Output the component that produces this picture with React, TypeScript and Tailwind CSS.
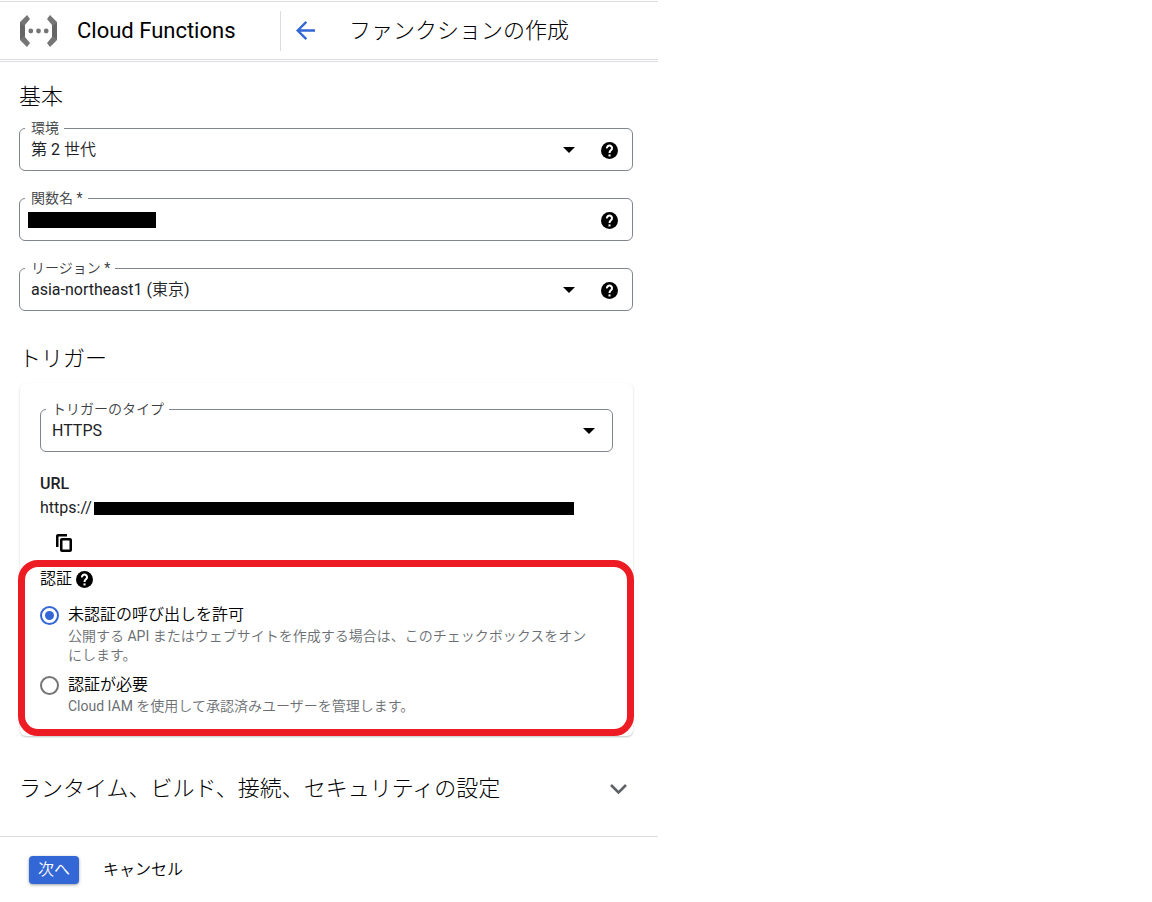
import { useState } from "react";

const HelpIcon = () => (
  <svg viewBox="2 2 20 20" className="size-[17px] shrink-0">
    <circle cx="12" cy="12" r="10" />
    <path
      d="M9 9.500a3 3 0 1 1 5 1.900c-1.200 1-2 1.600-2 3.600"
      fill="none"
      stroke="white"
      strokeWidth="2.400"
    />
    <path d="M10.800 16.600h2.400V19h-2.400z" fill="white" />
  </svg>
);

const HelpButton = () => (
  <button type="button" aria-label="ヘルプ" className="cursor-pointer">
    <HelpIcon />
  </button>
);

const FunctionsLogo = () => (
  <svg viewBox="0 0 37 32" className="h-8 w-[37px] shrink-0">
    <g fill="#757575">
      <path d="M7 0L0 7v18l7 7 3-4-5-6V10l5-6z" />
      <path d="M30 0l7 7v18l-7 7-3-4 5-6V10l-5-6z" />
      <circle cx="10.800" cy="16" r="2.400" />
      <circle cx="18.500" cy="16" r="2.400" />
      <circle cx="26.200" cy="16" r="2.400" />
    </g>
    <path d="M0 8l5 3v10l-5 3zM37 8l-5 3v10l5 3z" fill="#666666" />
  </svg>
);

const Field = ({ id, label, help, children }: any) => (
  <fieldset className="min-w-0 rounded-md border border-[#80868b] pb-2">
    <legend className="ml-[5px] pr-[5px] pl-[6px] text-sm leading-5 text-[#3c4043]">
      <label htmlFor={id} className="block">
        {label}
      </label>
    </legend>
    <div className="flex h-6 items-center pr-[14px] pl-[11px]">
      {children}
      {help && <HelpButton />}
    </div>
  </fieldset>
);

const Select = ({ id, options, help }: any) => (
  <div className={help ? "relative mr-[26px] flex-1" : "relative mr-[3px] flex-1"}>
    <select
      id={id}
      className="block w-full cursor-pointer appearance-none bg-transparent text-base leading-6 text-[#202124] outline-none"
    >
      {options.map((option: string) => (
        <option key={option}>{option}</option>
      ))}
    </select>
    <svg
      viewBox="0 0 12 6"
      className="pointer-events-none absolute top-[9px] right-0 h-[6px] w-3 fill-black"
    >
      <path d="M0 0h12L6 6z" />
    </svg>
  </div>
);

const authOptions = [
  {
    id: "allow",
    title: "未認証の呼び出しを許可",
    description:
      "公開する API またはウェブサイトを作成する場合は、このチェックボックスをオンにします。",
  },
  {
    id: "require",
    title: "認証が必要",
    description: "Cloud IAM を使用して承認済みユーザーを管理します。",
  },
];

const App = () => {
  const [auth, setAuth] = useState("allow");

  return (
    <div className="min-h-screen bg-white font-['Roboto','Noto_Sans_CJK_JP_DemiLight','Noto_Sans_CJK_JP',sans-serif] text-[#202124]">
      <div className="w-full max-w-[658px]">
        <header className="mt-px flex h-[61px] items-center border-t border-b-3 border-[#dadce0] pl-5 text-[22px] leading-8 text-black [border-bottom-style:double]">
          <FunctionsLogo />
          <span className="ml-5 w-[203px]">Cloud Functions</span>
          <div className="flex h-10 items-center border-l border-[#dadce0] pl-[15px]">
            <button type="button" aria-label="戻る" className="cursor-pointer">
              <svg viewBox="4 4 16 16" className="size-[19px] fill-[#3367d6]">
                <path d="M20 11H7.83l5.59-5.59L12 4l-8 8 8 8 1.41-1.41L7.83 13H20v-2z" />
              </svg>
            </button>
            <h1 className="ml-[34px] font-['Roboto','Noto_Sans_CJK_JP',sans-serif] font-light">
              ファンクションの作成
            </h1>
          </div>
        </header>

        <main className="pr-[25px] pl-[19px]">
          <h2 className="mt-[19px] font-['Roboto','Noto_Sans_CJK_JP',sans-serif] text-[22px] leading-8 font-light text-black">
            基本
          </h2>
          <div className="mt-[5px] flex flex-col gap-[17px]">
            <Field id="environment" label="環境" help>
              <Select id="environment" options={["第 2 世代"]} help />
            </Field>
            <Field id="function-name" label="関数名 *" help>
              <span className="-ml-[3px] h-4 w-32 shrink-0 bg-black" />
              <input
                id="function-name"
                type="text"
                className="min-w-0 flex-1 bg-transparent text-base leading-6 outline-none"
              />
            </Field>
            <Field id="region" label="リージョン *" help>
              <Select id="region" options={["asia-northeast1 (東京)"]} help />
            </Field>
          </div>

          <h2 className="mt-8 font-['Roboto','Noto_Sans_CJK_JP',sans-serif] text-[22px] leading-8 font-light text-black">
            トリガー
          </h2>
          <section className="mt-2 ml-px rounded-md px-5 pt-4 pb-5 shadow-[0_1px_2px_rgba(60,64,67,0.3)]">
            <Field id="trigger-type" label="トリガーのタイプ">
              <Select id="trigger-type" options={["HTTPS"]} />
            </Field>

            <h3 className="mt-5 text-base leading-6 font-medium">URL</h3>
            <div className="flex h-6 items-center text-base leading-6">
              https://
              <span className="mr-[39px] ml-[2px] h-[13px] flex-1 bg-black" />
            </div>
            <button
              type="button"
              aria-label="コピー"
              className="mt-[14px] ml-4 block cursor-pointer"
            >
              <svg viewBox="0 0 16 18" className="h-[18px] w-4 fill-black">
                <path d="M11 0H2C.9 0 0 .9 0 2v11h2.500V2.500H11V0z" />
                <path d="M14 4H6c-1.100 0-2 .9-2 2v10c0 1.100.9 2 2 2h8c1.100 0 2-.9 2-2V6c0-1.100-.9-2-2-2zm-.5 11.500h-7v-9h7v9z" />
              </svg>
            </button>

            <div className="relative mt-[15px]">
              <div className="pointer-events-none absolute -top-[7px] -right-[21px] -bottom-5 -left-[22px] rounded-[20px] border-[7px] border-[#ed1c24]" />
              <div className="flex h-6 items-center gap-1 text-base leading-6 text-black">
                認証
                <HelpButton />
              </div>
              <div className="mt-3 flex flex-col gap-2">
                {authOptions.map((option) => (
                  <label
                    key={option.id}
                    className="flex cursor-pointer items-start gap-[9px]"
                  >
                    <input
                      type="radio"
                      name="auth"
                      checked={auth === option.id}
                      onChange={() => setAuth(option.id)}
                      className="mt-[3px] flex size-[19px] shrink-0 appearance-none items-center justify-center rounded-full border-2 border-[#757575] before:size-[9px] before:rounded-full checked:border-[#3367d6] checked:before:bg-[#3367d6]"
                    />
                    <span className="pr-4">
                      <span className="block text-base leading-6 text-black">
                        {option.title}
                      </span>
                      <span className="block text-sm leading-[19px] text-[#6b6f73]">
                        {option.description}
                      </span>
                    </span>
                  </label>
                ))}
              </div>
            </div>
          </section>

          <button
            type="button"
            className="mt-[37px] flex w-full cursor-pointer items-center justify-between pr-[6px] text-left font-['Roboto','Noto_Sans_CJK_JP',sans-serif] text-[22px] leading-8 font-light text-black"
          >
            ランタイム、ビルド、接続、セキュリティの設定
            <svg viewBox="0 0 17 10" className="h-[10px] w-[17px] shrink-0">
              <path
                d="M1 1l7.500 7.500L16 1"
                fill="none"
                stroke="#5f6368"
                strokeWidth="2.600"
              />
            </svg>
          </button>
        </main>

        <footer className="mt-[31px] flex items-center gap-6 border-t border-[#dadce0] pt-[19px] pb-3 pl-[29px] text-base">
          <button
            type="button"
            className="h-7 cursor-pointer rounded bg-[#3367d6] px-[9px] leading-7 text-white shadow-[0_1px_3px_rgba(60,64,67,0.5)]"
          >
            次へ
          </button>
          <button
            type="button"
            className="h-7 cursor-pointer leading-7 text-black"
          >
            キャンセル
          </button>
        </footer>
      </div>
    </div>
  );
};

export default App;
